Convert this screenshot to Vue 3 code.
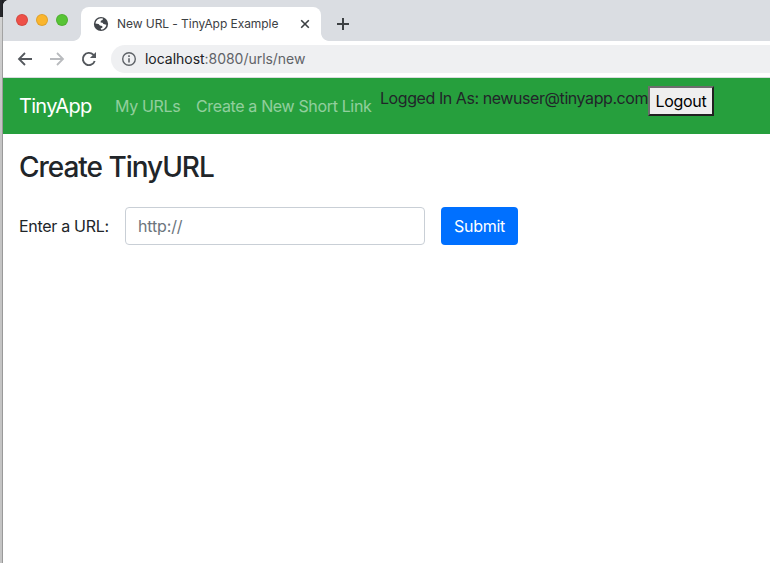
<script setup>
import { ref } from 'vue'

const links = [
  { label: 'My URLs', cls: 'urls' },
  { label: 'Create a New Short Link', cls: 'create' },
]
const longUrl = ref('')
</script>

<template>
  <div class="desktop">
    <div class="backdrop"></div>
    <div class="window">
      <div class="tabbar">
        <div class="lights">
          <span class="light red"></span>
          <span class="light yellow"></span>
          <span class="light green"></span>
        </div>
        <div class="tab">
          <svg class="globe" width="16" height="16" viewBox="0 0 16 16">
            <circle cx="8" cy="8" r="7.1" fill="#42464b" />
            <path d="M8 2.3 10 2.5 9.6 3.9 7.8 4.8 7.6 6.4 9.6 6.7 10.4 8.1 13.4 8.7C13.1 11.3 11 13.4 8.3 13.7L7.6 12.6 9.5 11.4 9.2 9.9 6.9 9.5 5.6 7.9 2.4 7.4C2.8 4.6 5 2.5 8 2.3Z" fill="#fff" />
          </svg>
          <span class="tab-title">New URL - TinyApp Example</span>
          <svg class="close" width="10" height="10" viewBox="0 0 10 10">
            <path d="M1.2 1.2 8.8 8.8M8.8 1.2 1.2 8.8" stroke="#3c4043" stroke-width="1.6" />
          </svg>
        </div>
        <svg class="plus" width="14" height="14" viewBox="0 0 14 14">
          <path d="M7 1V13M1 7H13" stroke="#3c4043" stroke-width="2" />
        </svg>
      </div>

      <div class="toolbar">
        <svg width="16" height="16" viewBox="0 0 16 16">
          <path d="M15 8H2.6M8 2 2 8 8 14" fill="none" stroke="#54585d" stroke-width="1.8" />
        </svg>
        <svg width="16" height="16" viewBox="0 0 16 16">
          <path d="M1 8H13.4M8 2 14 8 8 14" fill="none" stroke="#b9bbbe" stroke-width="1.8" />
        </svg>
        <svg width="16" height="16" viewBox="0 0 16 16">
          <path d="M13.7 10A6.1 6.1 0 1 1 12.3 3.7L13.6 5" fill="none" stroke="#54585d" stroke-width="1.9" />
          <path d="M15 1V7.1H8.9Z" fill="#54585d" />
        </svg>
        <div class="address">
          <svg width="16" height="16" viewBox="0 0 16 16">
            <circle cx="8" cy="8" r="6.3" fill="none" stroke="#5f6368" stroke-width="1.4" />
            <path d="M8 7.2V11.5M8 4.3V5.9" stroke="#5f6368" stroke-width="1.6" />
          </svg>
          <span class="url"><b>localhost</b>:8080/urls/new</span>
        </div>
      </div>

      <header class="navbar">
        <a class="brand">TinyApp</a>
        <nav class="links">
          <a v-for="l in links" :key="l.label" class="link" :class="l.cls">{{ l.label }}</a>
        </nav>
        <form class="session" @submit.prevent>
          <span class="user">Logged In As: newuser@tinyapp.com</span>
          <button class="logout"><span>Logout</span></button>
        </form>
      </header>

      <main class="content">
        <h3 class="heading"><span>Create TinyURL</span></h3>
        <form class="form" @submit.prevent>
          <label class="label" for="longURL">Enter a URL:</label>
          <input id="longURL" v-model="longUrl" class="input" type="text" placeholder="http://" />
          <button class="submit"><span>Submit</span></button>
        </form>
      </main>
    </div>
  </div>
</template>

<style>
body {
  margin: 0;
  overflow: hidden;
}
</style>

<style scoped>
* {
  box-sizing: border-box;
}
.desktop {
  display: flex;
  height: 563px;
  background: linear-gradient(#27282c 17px, #d3d3d3 17px, #c4c4c4 120px);
  font-family: Inter, "Liberation Sans", sans-serif;
  font-size: 16px;
  line-height: 24px;
  color: #212529;
  white-space: nowrap;
}
.backdrop {
  flex: none;
  width: 3px;
  border-right: 1px solid rgba(0, 0, 0, 0.22);
}
.window {
  flex: 1;
  min-width: 0;
  background: #fff;
  border-top-left-radius: 6px;
  overflow: hidden;
}
.tabbar {
  display: flex;
  height: 41px;
  background: #dadde2;
}
.lights {
  display: flex;
  gap: 8px;
  padding: 14px 0 0 13px;
  width: 78px;
}
.light {
  width: 12px;
  height: 12px;
  border-radius: 50%;
  border: 1px solid rgba(0, 0, 0, 0.1);
}
.red { background: #ee5048; }
.yellow { background: #fab52d; }
.green { background: #57c435; }
.tab {
  position: relative;
  display: flex;
  align-items: center;
  width: 240px;
  height: 34px;
  margin-top: 7px;
  padding: 0 11px 0 12px;
  background: #fff;
  border-radius: 8px 8px 0 0;
}
.tab::before,
.tab::after {
  content: "";
  position: absolute;
  bottom: 0;
  width: 8px;
  height: 8px;
}
.tab::before {
  left: -8px;
  background: radial-gradient(circle at 0 0, transparent 7.5px, #fff 8.2px);
}
.tab::after {
  right: -8px;
  background: radial-gradient(circle at 100% 0, transparent 7.5px, #fff 8.2px);
}
.tab-title {
  flex: 1;
  margin-left: 8px;
  font-size: 12px;
  letter-spacing: -0.06px;
  color: #3c4043;
}
.plus {
  margin: 17px 0 0 15px;
}
.toolbar {
  display: flex;
  align-items: center;
  gap: 16px;
  height: 37px;
  padding: 0 0 1px 14px;
  border-bottom: 1px solid #d9dbde;
}
.toolbar svg {
  flex: none;
}
.address {
  display: flex;
  align-items: center;
  flex: 1;
  height: 28px;
  margin-left: -2px;
  padding-left: 10px;
  border-radius: 14px 0 0 14px;
  background: #eff0f2;
}
.url {
  margin-left: 8px;
  font-size: 14px;
  letter-spacing: -0.03px;
  color: #5f6368;
}
.url b {
  font-weight: 400;
  color: #202124;
}
.navbar {
  display: flex;
  align-items: center;
  height: 56px;
  padding: 0 16px;
  background: #269f3d;
}
.brand {
  width: 96px;
  font-size: 20px;
  line-height: 30px;
  letter-spacing: -0.7px;
  color: #fff;
}
.links {
  display: flex;
}
.link {
  letter-spacing: -0.35px;
  color: rgba(255, 255, 255, 0.5);
}
.urls { width: 81px; }
.create { width: 184px; }
.session {
  display: flex;
  align-self: flex-start;
  padding-top: 8px;
}
.user {
  width: 268px;
  letter-spacing: -0.43px;
}
.logout {
  width: 66px;
  height: 30px;
  padding: 0;
  border: 2px solid;
  border-color: #6d6d6d #212121 #212121 #6d6d6d;
  background: #efefef;
  font: inherit;
  letter-spacing: -0.3px;
  color: #000;
}
.content {
  padding: 16px;
}
.heading {
  margin: 0 0 22px;
  font-size: 28px;
  line-height: 35px;
  font-weight: 500;
  letter-spacing: -1.03px;
}
.form {
  display: flex;
  align-items: center;
}
.label {
  width: 106px;
  letter-spacing: -0.3px;
}
.input {
  width: 300px;
  height: 38px;
  padding: 0 12px;
  border: 1px solid #c9cfd6;
  border-radius: 4px;
  background: #fff;
  font: inherit;
  letter-spacing: -0.15px;
  outline: none;
}
.input::placeholder {
  color: #6c757d;
  opacity: 1;
}
.submit {
  width: 77px;
  height: 38px;
  margin-left: 16px;
  padding: 0;
  border: 0;
  border-radius: 4px;
  background: #0070ff;
  color: #fff;
  font: inherit;
  letter-spacing: -0.25px;
}
</style>
